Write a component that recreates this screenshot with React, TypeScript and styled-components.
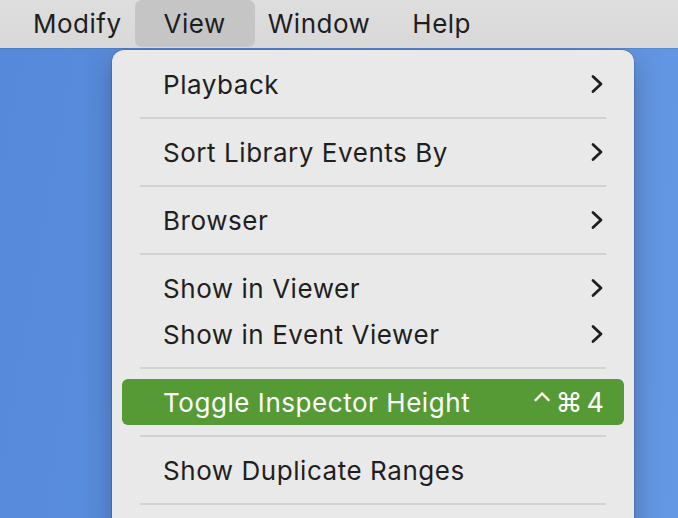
import React from "react";
import styled, { createGlobalStyle } from "styled-components";

const Global = createGlobalStyle`
  html, body { margin: 0; padding: 0; }
  body {
    width: 678px;
    height: 518px;
    overflow: hidden;
    font-family: Inter, "Noto Sans", "DejaVu Sans", sans-serif;
    -webkit-font-smoothing: antialiased;
  }
`;

const Page = styled.div`
  width: 678px;
  height: 518px;
  display: flex;
  flex-direction: column;
  overflow: hidden;
`;

const MenuBar = styled.div`
  height: 48px;
  flex: none;
  display: flex;
  align-items: stretch;
  padding-left: 12px;
  background: linear-gradient(#dedede, #d8d8d8);
  box-shadow: 0 1px 0 rgba(0, 0, 0, 0.08);
  position: relative;
  z-index: 1;
`;

const MenuTitle = styled.div<{ $active?: boolean }>`
  display: flex;
  align-items: center;
  padding: 0 ${(p) => (p.$active ? 29 : 21)}px;
  margin: 0 ${(p) => (p.$active ? -8 : 0)}px;
  height: 47px;
  font-size: 26px;
  letter-spacing: 0.5px;
  color: #1e1e1e;
  border-radius: 7px;
  background: ${(p) => (p.$active ? "#c5c5c5" : "transparent")};
`;

const Desktop = styled.div`
  flex: 1;
  background: linear-gradient(100deg, #5689da, #6498e4);
  padding: 2px 0 0 112px;
`;

const Menu = styled.div`
  width: 522px;
  box-sizing: border-box;
  background: #e9e9e9;
  border-radius: 12px;
  padding: 11px 10px 40px;
  box-shadow: 0 0 0 0.5px rgba(0, 0, 0, 0.25), 0 10px 30px rgba(0, 0, 0, 0.25);
`;

const Item = styled.div<{ $selected?: boolean }>`
  height: 46px;
  display: flex;
  align-items: center;
  padding: 0 20px 0 41px;
  border-radius: 6px;
  font-size: 26px;
  letter-spacing: 0.55px;
  color: ${(p) => (p.$selected ? "#ffffff" : "#1f1f1f")};
  background: ${(p) => (p.$selected ? "#559a35" : "transparent")};
`;

const Label = styled.span`
  flex: 1;
`;

const Shortcut = styled.span`
  display: flex;
  align-items: center;
  font-size: 27px;
  letter-spacing: 0;
  line-height: 1;
`;

const Glyph = styled.span<{ $size: number; $gap: number; $shift?: number }>`
  font-family: Inter, "DejaVu Sans", sans-serif;
  font-size: ${(p) => p.$size}px;
  font-weight: 400;
  line-height: 1;
  margin-right: ${(p) => p.$gap}px;
  position: relative;
  top: ${(p) => p.$shift ?? 0}px;
`;

const Separator = styled.div`
  height: 22px;
  display: flex;
  align-items: center;
  padding: 0 18px;
  &::after {
    content: "";
    flex: 1;
    height: 2px;
    background: #d2d2d2;
  }
`;

const Chevron = () => (
  <svg width="14" height="20" viewBox="0 0 14 20" fill="none">
    <path
      d="M3 2.5 L11 10 L3 17.5"
      stroke="#1f1f1f"
      strokeWidth="2.8"
      strokeLinecap="round"
      strokeLinejoin="round"
    />
  </svg>
);

type Entry =
  | { kind: "item"; label: string; sub?: boolean; shortcut?: boolean; selected?: boolean }
  | { kind: "sep" };

const entries: Entry[] = [
  { kind: "item", label: "Playback", sub: true },
  { kind: "sep" },
  { kind: "item", label: "Sort Library Events By", sub: true },
  { kind: "sep" },
  { kind: "item", label: "Browser", sub: true },
  { kind: "sep" },
  { kind: "item", label: "Show in Viewer", sub: true },
  { kind: "item", label: "Show in Event Viewer", sub: true },
  { kind: "sep" },
  { kind: "item", label: "Toggle Inspector Height", shortcut: true, selected: true },
  { kind: "sep" },
  { kind: "item", label: "Show Duplicate Ranges" },
  { kind: "sep" },
];

export default function App() {
  return (
    <Page>
      <Global />
      <MenuBar>
        <MenuTitle>Modify</MenuTitle>
        <MenuTitle $active>View</MenuTitle>
        <MenuTitle>Window</MenuTitle>
        <MenuTitle>Help</MenuTitle>
      </MenuBar>
      <Desktop>
        <Menu>
          {entries.map((e, i) =>
            e.kind === "sep" ? (
              <Separator key={i} />
            ) : (
              <Item key={i} $selected={e.selected}>
                <Label>{e.label}</Label>
                {e.sub && <Chevron />}
                {e.shortcut && (
                  <Shortcut>
                    <Glyph $size={27} $gap={3}>⌃</Glyph>
                    <Glyph $size={27} $gap={4}>⌘</Glyph>
                    <span>4</span>
                  </Shortcut>
                )}
              </Item>
            )
          )}
        </Menu>
      </Desktop>
    </Page>
  );
}
